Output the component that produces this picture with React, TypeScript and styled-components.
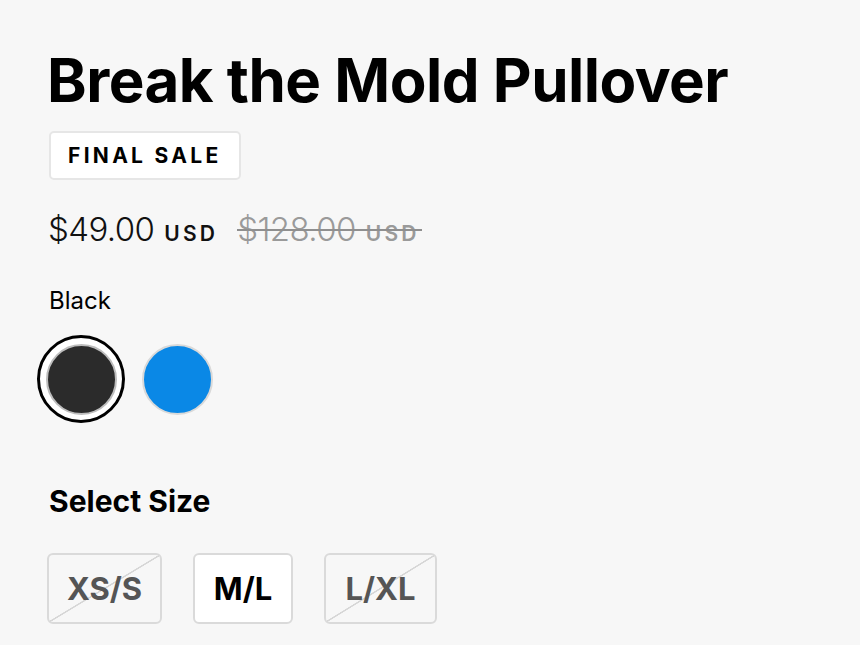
import React from "react";
import styled, { createGlobalStyle } from "styled-components";

const Global = createGlobalStyle`
  html, body { margin: 0; padding: 0; background: #f7f7f7; }
  body { font-family: Inter, "Noto Sans", sans-serif; color: #000; }
`;

const Page = styled.main`
  padding: 44px 0 0 47px;
  display: flex;
  flex-direction: column;
  align-items: flex-start;
`;

const Title = styled.h1`
  margin: 0;
  font-size: 60px;
  line-height: 72px;
  font-weight: 700;
  letter-spacing: -0.5px;
`;

const Badge = styled.div`
  margin-top: 15px;
  margin-left: 2px;
  box-sizing: border-box;
  height: 49px;
  padding: 0 17px 0 17px;
  display: flex;
  align-items: center;
  background: #fff;
  border: 2px solid #e6e6e6;
  border-radius: 5px;
  font-size: 21px;
  font-weight: 700;
  letter-spacing: 3.3px;
`;

const PriceRow = styled.div`
  margin-top: 29px;
  display: flex;
  align-items: baseline;
  gap: 19px;
  margin-left: 1px;
`;

const Price = styled.span<{ $old?: boolean }>`
  font-size: 33px;
  font-weight: 300;
  letter-spacing: -0.6px;
  color: ${(p) => (p.$old ? "#9a9a9a" : "#111")};
  position: relative;
  ${(p) =>
    p.$old &&
    `&::after { content: ""; position: absolute; left: 0; right: -2px; top: 50%; height: 2px; background: #8f8f8f; }`}
`;

const Currency = styled.span`
  font-size: 21px;
  font-weight: 600;
  letter-spacing: 3.2px;
  margin-left: 10px;
`;

const ColorName = styled.div`
  margin-top: 37px;
  margin-left: 2px;
  font-size: 24px;
  font-weight: 400;
`;

const Swatches = styled.div`
  margin-top: 20px;
  margin-left: -10px;
  display: flex;
  gap: 8px;
`;

const Swatch = styled.button<{ $color: string; $selected?: boolean }>`
  box-sizing: border-box;
  width: 88px;
  height: 88px;
  padding: 0;
  border-radius: 50%;
  border: 3px solid ${(p) => (p.$selected ? "#000" : "transparent")};
  background: ${(p) => (p.$selected ? "#fff" : "transparent")};
  display: flex;
  align-items: center;
  justify-content: center;
  cursor: pointer;
  &::before {
    content: "";
    box-sizing: border-box;
    width: 71px;
    height: 71px;
    border-radius: 50%;
    background: ${(p) => p.$color};
    border: 2px solid ${(p) => (p.$selected ? "#bdbdbd" : "#d9d9d9")};
  }
`;

const SizeHeading = styled.h2`
  margin: 60px 0 0 2px;
  font-size: 30px;
  line-height: 36px;
  font-weight: 700;
`;

const SizeRow = styled.div`
  margin-top: 34px;
  display: flex;
  gap: 31px;
`;

const SizeButton = styled.button<{ $disabled?: boolean }>`
  position: relative;
  overflow: hidden;
  box-sizing: border-box;
  height: 71px;
  min-width: 100px;
  padding: 0 14px;
  border: 2px solid #dadada;
  border-radius: 6px;
  background: ${(p) => (p.$disabled ? "transparent" : "#fff")};
  color: ${(p) => (p.$disabled ? "#555" : "#000")};
  font-family: Inter, "Noto Sans", sans-serif;
  font-size: 31px;
  font-weight: 700;
  cursor: pointer;
  ${(p) =>
    p.$disabled &&
    `background-image: linear-gradient(to bottom right, transparent calc(50% - 1px), #d6d6d6 calc(50% - 0.5px), #d6d6d6 calc(50% + 0.5px), transparent calc(50% + 1px));`}
`;

export default function App() {
  return (
    <>
      <Global />
      <Page>
        <Title>Break the Mold Pullover</Title>
        <Badge>FINAL SALE</Badge>
        <PriceRow>
          <Price>
            $49.00<Currency>USD</Currency>
          </Price>
          <Price $old>
            $128.00<Currency>USD</Currency>
          </Price>
        </PriceRow>
        <ColorName>Black</ColorName>
        <Swatches>
          <Swatch $color="#2b2b2b" $selected aria-label="Black" />
          <Swatch $color="#0a88e6" aria-label="Blue" />
        </Swatches>
        <SizeHeading>Select Size</SizeHeading>
        <SizeRow>
          <SizeButton $disabled style={{ width: 115 }}>XS/S</SizeButton>
          <SizeButton style={{ width: 100 }}>M/L</SizeButton>
          <SizeButton $disabled style={{ width: 113 }}>L/XL</SizeButton>
        </SizeRow>
      </Page>
    </>
  );
}
